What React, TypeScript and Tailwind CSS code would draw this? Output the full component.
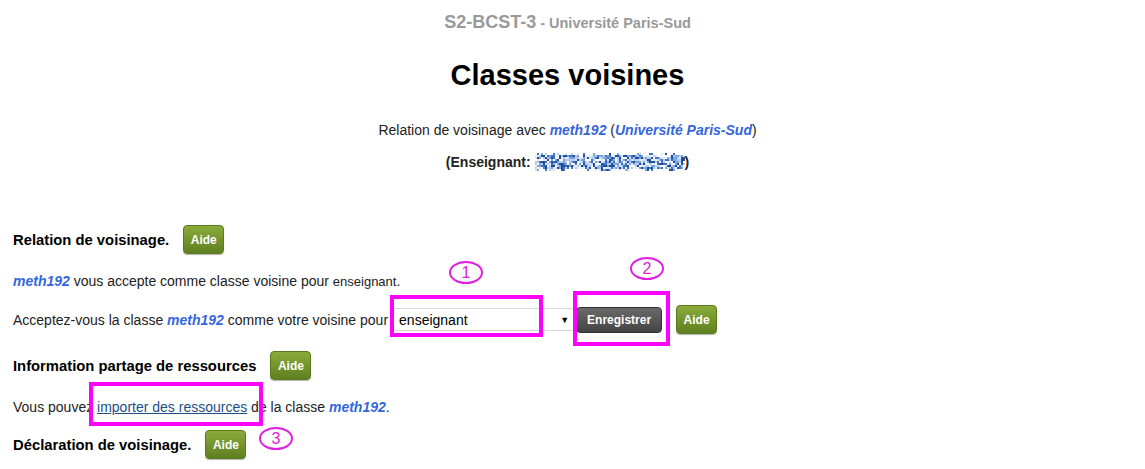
import React from "react";

function Aide() {
  return (
    <button className="h-[29px] w-[41px] rounded-[4px] border border-[#5a7a1c] bg-gradient-to-b from-[#8aab3a] to-[#5f8020] text-[12px] font-bold text-white shadow-[0_1px_1px_rgba(0,0,0,0.3)]">
      Aide
    </button>
  );
}

function Meth() {
  return <span className="font-bold italic text-[#3366dd]">meth192</span>;
}

// nom flouté (bruit de pixels)
function Flou() {
  let seed = 7;
  const rnd = () => {
    seed = (seed * 16807) % 2147483647;
    return seed / 2147483647;
  };
  const cols = ["#1f4f9a", "#3f74c4", "#7fa6dc", "#b8cdee", "#dfe8f6"];
  const cells: React.ReactNode[] = [];
  for (let y = 0; y < 9; y++) {
    for (let x = 0; x < 75; x++) {
      const r = rnd();
      const edge = y === 0 || y === 8 ? 0.7 : 0.15;
      if (r < edge) continue;
      cells.push(
        <rect key={x + "-" + y} x={x * 2} y={y * 2} width={2} height={2} fill={cols[Math.floor(rnd() * cols.length)]} />
      );
    }
  }
  return (
    <svg width="150" height="18" viewBox="0 0 150 18" className="inline-block">
      {cells}
    </svg>
  );
}

function Bulle({ n, x, y }: { n: string; x: number; y: number }) {
  return (
    <div
      className="absolute flex h-[23px] w-[34px] items-center justify-center rounded-[50%] border-2 border-[#e020e0] text-[16px] leading-none text-[#e020e0]"
      style={{ left: x, top: y }}
    >
      {n}
    </div>
  );
}

function Cadre({ x, y, w, h }: { x: number; y: number; w: number; h: number }) {
  return (
    <div
      className="absolute border-4 border-[#ff00ff]"
      style={{ left: x, top: y, width: w, height: h }}
    />
  );
}

export default function App() {
  return (
    <div className="relative h-[469px] w-[1145px] overflow-hidden bg-white font-['Liberation_Sans',Arial,sans-serif] text-[14px] leading-[18px] text-[#222]">
      <div className="w-[1135px]">
        <div className="pt-[12px] text-center font-bold leading-[20px] text-[#999]">
          <span className="text-[18px]">S2-BCST-3</span>
          <span className="text-[14.5px]"> - Université Paris-Sud</span>
        </div>
        <h1 className="mt-[25px] text-center text-[29px] font-bold leading-[34px] text-black">Classes voisines</h1>
        <p className="mt-[29px] text-center">
          Relation de voisinage avec <Meth /> (
          <span className="font-bold italic text-[#3366dd]">Université Paris-Sud</span>)
        </p>
        <p className="mt-[14px] flex h-[18px] items-center justify-center font-bold">
          (Enseignant:&nbsp;
          <Flou />)
        </p>
      </div>

      <div className="mt-[54px] px-[13px]">
        <div className="flex items-center gap-[14px]">
          <span className="text-[14.8px] font-bold text-black">Relation de voisinage.</span>
          <Aide />
        </div>
        <p className="mt-[18px]">
          <Meth /> vous accepte comme classe voisine pour <span className="text-[13px]">enseignant</span>.
        </p>
        <div className="mt-[14px] flex items-center">
          <span>
            Acceptez-vous la classe <Meth /> comme votre voisine pour
          </span>
          <div className="ml-[2px] flex h-[23px] w-[183px] items-center justify-between border-y border-[#d8d8d8] bg-white pl-[9px] pr-[4px] text-[14px] text-black">
            <span>enseignant</span>
            <span className="text-[9px]">▼</span>
          </div>
          <button className="ml-[3px] h-[26px] w-[86px] rounded-[4px] border border-[#333] bg-gradient-to-b from-[#6a6a6a] to-[#444] text-[12px] font-bold text-white">
            Enregistrer
          </button>
          <span className="ml-[14px] flex">
            <Aide />
          </span>
        </div>
        <div className="mt-[17px] flex items-center gap-[14px]">
          <span className="text-[14.8px] font-bold text-black">Information partage de ressources</span>
          <Aide />
        </div>
        <p className="mt-[18px]">
          Vous pouvez <span className="text-[#1c4f85] underline">importer des ressources</span> de la classe{" "}
          <Meth />.
        </p>
        <div className="mt-[14px] flex items-center gap-[14px]">
          <span className="text-[14.8px] font-bold text-black">Déclaration de voisinage.</span>
          <Aide />
        </div>
      </div>

      <Cadre x={390} y={295} w={153} h={42} />
      <Cadre x={573} y={291} w={97} h={55} />
      <Cadre x={89} y={382} w={174} h={44} />
      <Bulle n="1" x={449} y={261} />
      <Bulle n="2" x={630} y={257} />
      <Bulle n="3" x={259} y={427} />
    </div>
  );
}
